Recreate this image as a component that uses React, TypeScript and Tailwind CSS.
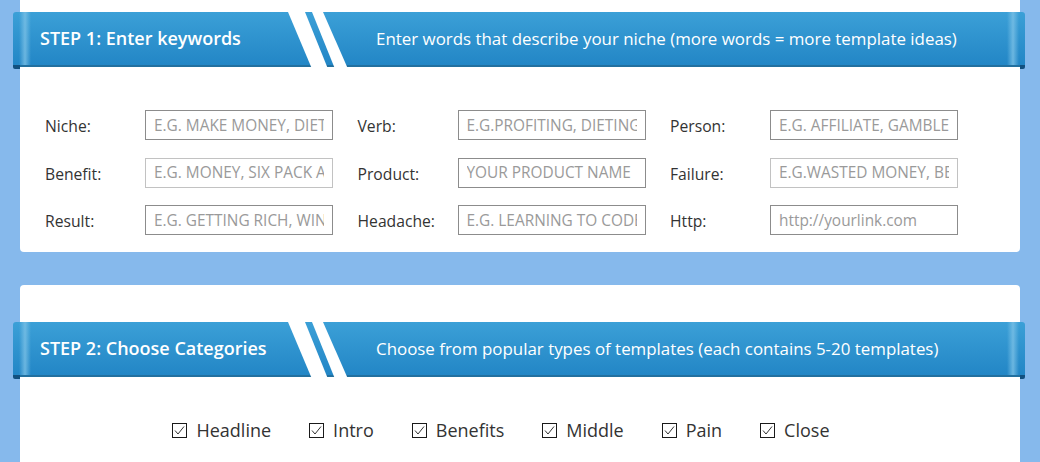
import React from 'react';

const font = { fontFamily: '"Open Sans", "Noto Sans", sans-serif' };

const fields = [
	[
		{ label: 'Niche:', ph: 'E.G. MAKE MONEY, DIETING, FITNESS' },
		{ label: 'Benefit:', ph: 'E.G. MONEY, SIX PACK ABS', light: true },
		{ label: 'Result:', ph: 'E.G. GETTING RICH, WINNING' },
	],
	[
		{ label: 'Verb:', ph: 'E.G.PROFITING, DIETING' },
		{ label: 'Product:', ph: 'YOUR PRODUCT NAME' },
		{ label: 'Headache:', ph: 'E.G. LEARNING TO CODE' },
	],
	[
		{ label: 'Person:', ph: 'E.G. AFFILIATE, GAMBLER' },
		{ label: 'Failure:', ph: 'E.G.WASTED MONEY, BELLY FAT', light: true },
		{ label: 'Http:', ph: 'http://yourlink.com' },
	],
];

const categories = ['Headline', 'Intro', 'Benefits', 'Middle', 'Pain', 'Close'];

function Ribbon({ title, subtitle }: { title: string; subtitle: string }) {
	return (
		<div className="relative ml-[-7px] mr-[-5px] h-[55px] rounded-t-[3px] border-b-[2px] border-[#22709f] bg-gradient-to-b from-[#3ba0d7] to-[#2286c6]">
			{/* light edge bands */}
			<div className="absolute left-[6px] top-0 h-full w-[12px] bg-gradient-to-r from-transparent via-[#7cc1e6] to-transparent opacity-80" />
			<div className="absolute right-[6px] top-0 h-full w-[12px] bg-gradient-to-r from-transparent via-[#7cc1e6] to-transparent opacity-80" />
			{/* folds */}
			<div className="absolute left-0 top-full h-[4px] w-[7px] rounded-bl-[2px] bg-[#12507f]" />
			<div className="absolute right-0 top-full h-[4px] w-[5px] rounded-br-[2px] bg-[#12507f]" />
			{/* stripes */}
			<svg className="absolute left-[275px] top-0" width="60" height="57" viewBox="0 0 60 57">
				<polygon points="0,0 17,0 40,57 24,57" fill="#fff" />
				<polygon points="24,0 35,0 60,57 47,57" fill="#fff" />
			</svg>
			<div className="relative flex h-full items-center text-white">
				<div className="w-[363px] pl-[27px] text-[18px] font-semibold">{title}</div>
				<div className="text-[16.9px]">{subtitle}</div>
			</div>
		</div>
	);
}

function Check({ label }: { label: string }) {
	return (
		<label className="mr-[38px] flex items-center gap-[9px] text-[18px] text-[#333]">
			<svg width="15" height="15" viewBox="0 0 15 15">
				<rect x="0.5" y="0.5" width="14" height="14" fill="#fff" stroke="#1a1a1a" />
				<polyline points="3,7.5 6,11 12,3.5" fill="none" stroke="#333" strokeWidth="1" />
			</svg>
			<span>{label}</span>
		</label>
	);
}

export default function App() {
	return (
		<div className="h-[462px] w-[1040px] overflow-hidden bg-[#86b9ec]" style={font}>
			<div className="mx-[20px] rounded-b-[4px] bg-white pb-[17px] pt-[12px]">
				<Ribbon
					title="STEP 1: Enter keywords"
					subtitle="Enter words that describe your niche (more words = more template ideas)"
				/>
				<div className="mt-[43px] flex pl-[25px]">
					{fields.map((col, i) => (
						<div key={i} className="flex w-[312.5px] flex-col gap-[17.5px]">
							{col.map((f) => (
								<div key={f.label} className="flex items-center">
									<span className="w-[100px] pt-[4px] text-[15.7px] text-[#333]">{f.label}</span>
									<input
										placeholder={f.ph}
										className={
											'h-[30px] w-[188px] border bg-white px-[8px] text-[15.4px] placeholder:text-[#9a9a9a] outline-none ' +
											(f.light ? 'border-[#c2c2c2]' : 'border-[#8c8c8c]')
										}
									/>
								</div>
							))}
						</div>
					))}
				</div>
			</div>

			<div className="mx-[20px] mt-[33px] rounded-t-[4px] bg-white pt-[37px]">
				<Ribbon
					title="STEP 2: Choose Categories"
					subtitle="Choose from popular types of templates (each contains 5-20 templates)"
				/>
				<div className="flex justify-center pb-[30px] pt-[40px]">
					{categories.map((c) => (
						<Check key={c} label={c} />
					))}
				</div>
			</div>
		</div>
	);
}
